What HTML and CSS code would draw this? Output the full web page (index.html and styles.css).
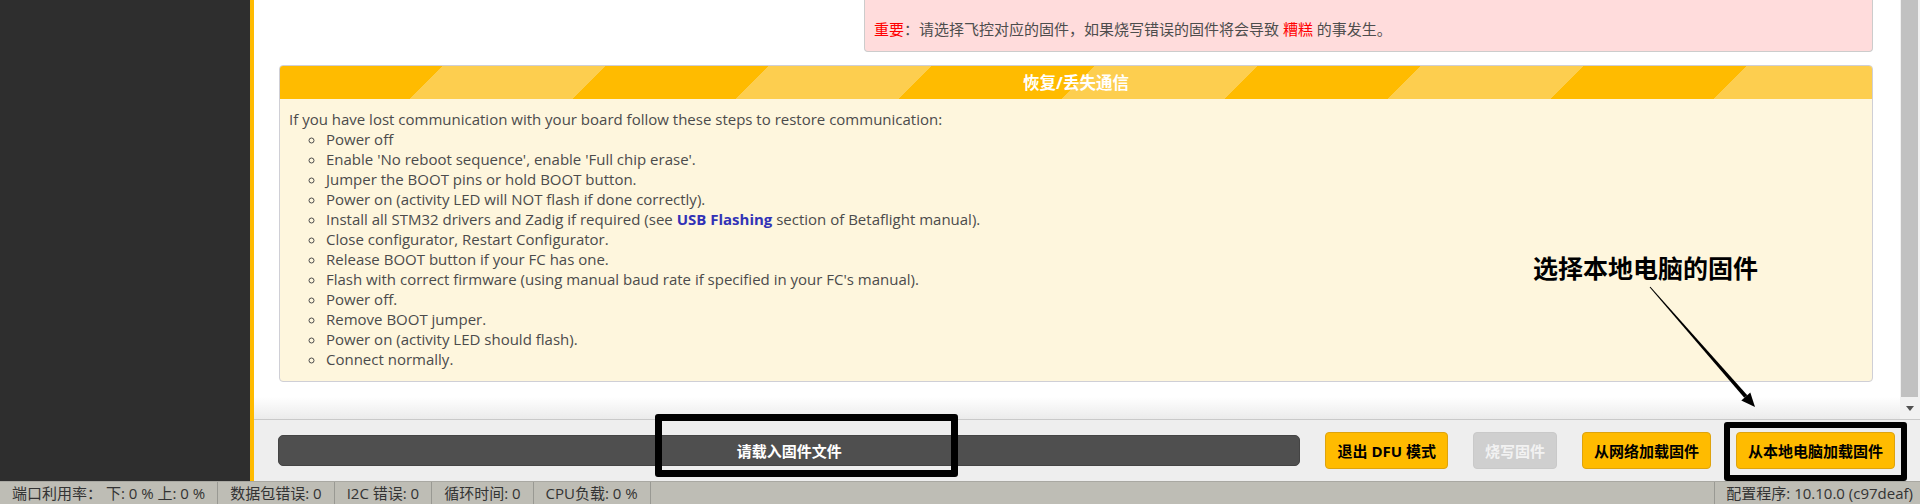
FILE: index.html
```html
<!DOCTYPE html>
<html lang="zh-CN">
<head>
  <meta charset="UTF-8">
  <meta name="viewport" content="width=device-width, initial-scale=1.0">
  <title>固件烧写</title>
  <link rel="stylesheet" href="styles.css">
</head>
<body>
  <div class="app">
    <div class="main">
      <aside class="sidebar"></aside>
      <div class="content">
        <div class="viewport">
          <div class="tab">
            <div class="note-row">
              <div class="note"><span class="warn">重要</span>：请选择飞控对应的固件，如果烧写错误的固件将会导致 <span class="warn">糟糕</span> 的事发生。</div>
            </div>
            <section class="gui-box">
              <div class="gui-box-title">恢复/丢失通信</div>
              <div class="gui-box-body">
                <p>If you have lost communication with your board follow these steps to restore communication:</p>
                <ul>
                  <li>Power off</li>
                  <li>Enable 'No reboot sequence', enable 'Full chip erase'.</li>
                  <li>Jumper the BOOT pins or hold BOOT button.</li>
                  <li>Power on (activity LED will NOT flash if done correctly).</li>
                  <li>Install all STM32 drivers and Zadig if required (see <a class="link" href="#">USB Flashing</a> section of Betaflight manual).</li>
                  <li>Close configurator, Restart Configurator.</li>
                  <li>Release BOOT button if your FC has one.</li>
                  <li>Flash with correct firmware (using manual baud rate if specified in your FC's manual).</li>
                  <li>Power off.</li>
                  <li>Remove BOOT jumper.</li>
                  <li>Power on (activity LED should flash).</li>
                  <li>Connect normally.</li>
                </ul>
              </div>
            </section>
          </div>
          <div class="scrollbar">
            <div class="scroll-thumb"></div>
            <div class="scroll-down"><span class="tri"></span></div>
          </div>
        </div>
        <div class="toolbar">
          <div class="progress">请载入固件文件</div>
          <a class="btn" href="#">退出 DFU 模式</a>
          <a class="btn disabled" href="#">烧写固件</a>
          <a class="btn" href="#">从网络加载固件</a>
          <a class="btn" href="#">从本地电脑加载固件</a>
        </div>
      </div>
    </div>
    <footer class="statusbar">
      <div class="status-item">端口利用率： 下: 0 % 上: 0 %</div>
      <div class="status-item">数据包错误: 0</div>
      <div class="status-item">I2C 错误: 0</div>
      <div class="status-item">循环时间: 0</div>
      <div class="status-item last">CPU负载: 0 %</div>
      <div class="status-version">配置程序: 10.10.0 (c97deaf)</div>
    </footer>

    <!-- annotations drawn over the screenshot -->
    <div class="mark mark-progress"></div>
    <div class="mark mark-local"></div>
    <div class="callout">选择本地电脑的固件</div>
    <svg class="callout-arrow" width="130" height="135" viewBox="0 0 130 135">
      <polygon points="10.4,6.7 107.3,115.2 104.3,117.8 9.6,7.3" fill="#000"/>
      <polygon points="110.3,112.6 115,127 101.3,120.4" fill="#000"/>
    </svg>
  </div>
</body>
</html>
```

FILE: styles.css
```css
body {
  margin: 0;
  font-family: "Open Sans", "Noto Sans CJK SC", sans-serif;
  overflow: hidden;
}
.app {
  position: relative;
  height: 504px;
  display: flex;
  flex-direction: column;
}
.main {
  flex: 1;
  display: flex;
  min-height: 0;
}
.sidebar {
  width: 250px;
  background-color: #2e2e2e;
  border-right: 4px solid #ffbb00;
}
.content {
  flex: 1;
  display: flex;
  flex-direction: column;
  min-width: 0;
  background-color: #fff;
}
.viewport {
  flex: 1;
  display: flex;
  min-height: 0;
  overflow: hidden;
}
.tab {
  flex: 1;
  padding: 0 27px 0 25px;
  background: linear-gradient(#fff calc(100% - 22px), #ebebeb);
}
.note-row {
  display: flex;
  justify-content: flex-end;
}
.note {
  width: 1009px;
  box-sizing: border-box;
  padding: 19px 9px 12px;
  background-color: #ffdcdc;
  border: 1px solid #cccccc;
  border-top: 0;
  border-radius: 0 0 4px 4px;
  font-size: 15px;
  line-height: 20px;
  color: #4d4d4d;
}
.warn {
  color: #ff0000;
}
.gui-box {
  margin-top: 13px;
  border: 1px solid #cfcfd6;
  border-radius: 4px;
  background-color: #fef6dd;
  overflow: hidden;
}
.gui-box-title {
  height: 33px;
  line-height: 33px;
  text-align: center;
  color: #fff;
  font-weight: bold;
  font-size: 16.5px;
  background: repeating-linear-gradient(135deg, #ffbb00 0 115.25px, #fdce4f 115.25px 230.5px);
}
.gui-box-body {
  padding: 10px 9px 12px;
  font-size: 15px;
  line-height: 20px;
  color: #4b4b4b;
}
.gui-box-body p {
  margin: 0;
}
.gui-box-body ul {
  margin: 0;
  padding-left: 37px;
  list-style: circle;
}
.link {
  color: #3232b6;
  font-weight: bold;
  text-decoration: none;
}
.scrollbar {
  width: 20px;
  display: flex;
  flex-direction: column;
  background-color: #f1f1f1;
}
.scroll-thumb {
  height: 397px;
  margin: 0 2px 0 1px;
  background-color: #c1c1c1;
}
.scroll-down {
  flex: 1;
  display: flex;
  align-items: center;
  justify-content: center;
}
.tri {
  width: 0;
  height: 0;
  border-left: 4px solid transparent;
  border-right: 4px solid transparent;
  border-top: 5px solid #505050;
}
.toolbar {
  height: 61px;
  display: flex;
  align-items: center;
  gap: 25px;
  padding: 0 25px 0 24px;
  background-color: #eeeeee;
  border-top: 1px solid #c9c9c9;
}
.progress {
  flex: 1;
  height: 31px;
  box-sizing: border-box;
  display: flex;
  align-items: center;
  justify-content: center;
  background-color: #4f4f4f;
  border: 1px solid #444;
  border-radius: 5px;
  color: #fff;
  font-weight: bold;
  font-size: 15px;
}
.btn {
  height: 37px;
  box-sizing: border-box;
  display: flex;
  align-items: center;
  padding: 0 11px;
  background-color: #ffbb00;
  border: 1px solid #dea30e;
  border-radius: 4px;
  color: #000;
  font-weight: bold;
  font-size: 15px;
  text-decoration: none;
}
.btn.disabled {
  background-color: #cfcfcf;
  border-color: #c9c9c9;
  color: #f2f2f2;
}
.statusbar {
  height: 22px;
  display: flex;
  background-color: #bebdb5;
  border-top: 1px solid #a9a8a2;
  font-size: 15px;
  line-height: 22px;
  color: #333;
}
.status-item {
  padding: 0 12px;
  border-right: 1px solid #999993;
}
.status-version {
  margin-left: auto;
  padding: 0 7px 0 11px;
  border-left: 1px solid #999993;
}
.mark {
  position: absolute;
  box-sizing: border-box;
  border: 7px solid #000;
  border-radius: 3px;
}
.mark-progress {
  left: 655px;
  top: 414px;
  width: 303px;
  height: 63px;
}
.mark-local {
  left: 1724px;
  top: 422px;
  width: 183px;
  height: 59px;
  border-width: 6px;
}
.callout {
  position: absolute;
  left: 1533px;
  top: 256px;
  font-size: 25px;
  line-height: 25px;
  font-weight: bold;
  color: #000;
}
.callout-arrow {
  position: absolute;
  left: 1640px;
  top: 280px;
}
```
